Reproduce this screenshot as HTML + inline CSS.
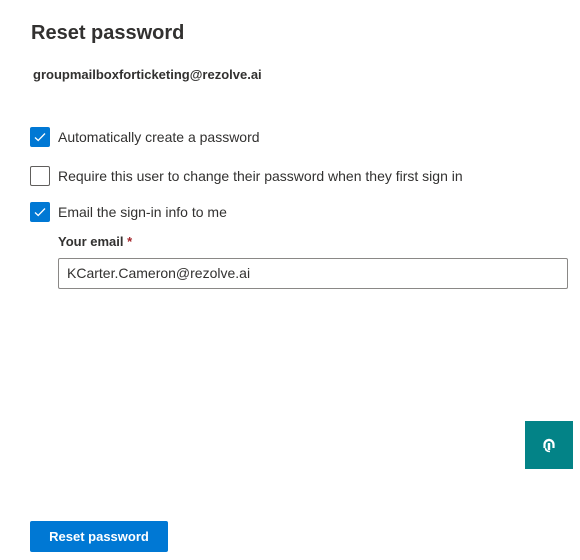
<!DOCTYPE html>
<html><head><style>
body{margin:0;width:580px;height:560px;background:#fff;font-family:"Liberation Sans",sans-serif;color:#323130;position:relative;overflow:hidden}
.a{position:absolute}
h1{position:absolute;left:31px;top:22px;margin:0;font-size:20px;font-weight:bold;color:#323130}
.cb{position:absolute;left:30px;width:20px;height:20px;box-sizing:border-box;border-radius:2px}
.on{background:#0078d4}
.off{border:1px solid #605e5c;background:#fff}
.lbl{position:absolute;left:58px;font-size:14px;color:#323130}
</style></head><body>
<h1>Reset password</h1>
<div class="a" style="left:33px;top:67px;font-size:13px;font-weight:bold;color:#323130">groupmailboxforticketing@rezolve.ai</div>
<div class="cb on" style="top:127px"><svg width="20" height="20"><path d="M5 10.5l3.2 3L15 6.5" stroke="#fff" stroke-width="1.3" fill="none"/></svg></div>
<div class="lbl" style="top:129px">Automatically create a password</div>
<div class="cb off" style="top:166px"></div>
<div class="lbl" style="top:168px">Require this user to change their password when they first sign in</div>
<div class="cb on" style="top:202px"><svg width="20" height="20"><path d="M5 10.5l3.2 3L15 6.5" stroke="#fff" stroke-width="1.3" fill="none"/></svg></div>
<div class="lbl" style="top:204px">Email the sign-in info to me</div>
<div class="a" style="left:58px;top:234px;font-size:13px;font-weight:bold">Your email <span style="color:#a4262c">*</span></div>
<div class="a" style="left:58px;top:258px;width:510px;height:31px;box-sizing:border-box;border:1px solid #8a8886;border-radius:2px;font-size:14px;padding:6px 8px">KCarter.Cameron@rezolve.ai</div>
<div class="a" style="left:525px;top:421px;width:48px;height:48px;background:#038387"><svg width="48" height="48"><path d="M19.5 27v-3.5a4.5 4.5 0 0 1 9 0v3.5" stroke="#fff" stroke-width="2.2" fill="none"/><path d="M24 22v7" stroke="#fff" stroke-width="2.5"/><path d="M21 20.5l3-2 3 2" stroke="#fff" stroke-width="1.5" fill="none"/><path d="M20.5 27q0 3.5 4.5 3.5" stroke="#fff" stroke-width="1.6" fill="none"/></svg></div>
<div class="a" style="left:30px;top:521px;width:138px;height:31px;background:#0078d4;border-radius:2px;color:#fff;font-size:13px;font-weight:bold;text-align:center;line-height:31px">Reset password</div>
</body></html>
